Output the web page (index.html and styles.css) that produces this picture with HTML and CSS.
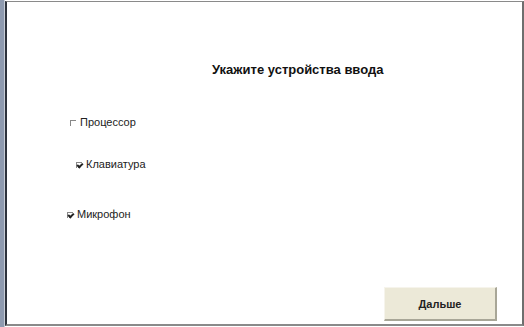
FILE: index.html
```html
<!DOCTYPE html>
<html>

<head>
  <title>Устройства ввода</title>
  <link rel="stylesheet" href="styles.css">
</head>

<body>
  <div class="screen">
    <div class="strip"></div>
    <div class="panel">
      <h1 class="title">Укажите устройства ввода</h1>
      <ul class="options">
        <li class="option option-cpu"><span class="box"></span>Процессор</li>
        <li class="option option-kbd"><span class="box checked"></span>Клавиатура</li>
        <li class="option option-mic"><span class="box checked"></span>Микрофон</li>
      </ul>
      <div class="actions">
        <button class="next">Дальше</button>
      </div>
    </div>
  </div>
</body>

</html>
```

FILE: styles.css
```css
html,
body {
  margin: 0;
  height: 100%;
  background: #fff;
  font: 11px/1 "Liberation Sans", Arial, sans-serif;
  color: #222;
}

.screen {
  display: flex;
  width: 524px;
  height: 327px;
}

.strip {
  width: 4px;
  background: #8f9bb0;
  border-right: 1px solid #c8ced8;
}

.panel {
  flex: 1;
  display: flex;
  flex-direction: column;
  margin-top: 1px;
  border-left: 2px solid #2e333d;
  border-top: 1px solid #8a8a8a;
  border-right: 2px solid #6e6e6e;
  border-bottom: 2px solid #8a8a8a;
  margin-bottom: 1px;
}

.title {
  margin: 61px 0 0 205px;
  font-size: 13px;
  font-weight: bold;
  color: #111;
}

.options {
  list-style: none;
  margin: 0;
  padding: 0;
}

.option {
  display: flex;
  align-items: center;
  gap: 4px;
  color: #222;
}

.option-cpu {
  margin: 41px 0 0 63px;
}

.option-kbd {
  margin: 31px 0 0 69px;
}

.option-mic {
  margin: 39px 0 0 60px;
}

.box {
  width: 5px;
  height: 5px;
  border-top: 1px solid #888;
  border-left: 1px solid #888;
  position: relative;
}

.box.checked::after {
  content: "";
  position: absolute;
  left: 0;
  top: 0;
  width: 4px;
  height: 2px;
  border-left: 2px solid #222;
  border-bottom: 2px solid #222;
  transform: rotate(-45deg);
}

.actions {
  margin-top: auto;
  display: flex;
  justify-content: flex-end;
  padding: 0 25px 3px 0;
}

.next {
  width: 113px;
  height: 34px;
  background: #ece9d8;
  border: 1px solid #f6f4ec;
  border-right: 2px solid #a8a697;
  border-bottom: 2px solid #a8a697;
  font: bold 11px "Liberation Sans", Arial, sans-serif;
  color: #222;
}
```
